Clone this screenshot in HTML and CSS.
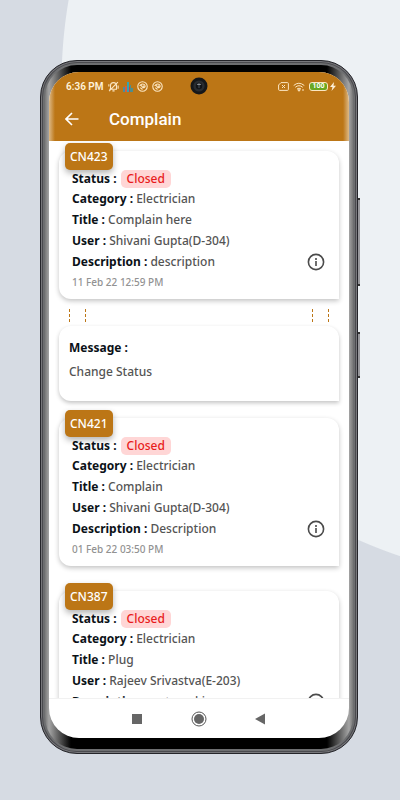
FILE: index.html
```html
<!DOCTYPE html>
<html lang="en">
<head>
<meta charset="utf-8">
<meta name="viewport" content="width=device-width, initial-scale=1">
<title>Complain</title>
<link rel="stylesheet" href="styles.css">
</head>
<body>
<div class="phone">
  <span class="side-key side-key-long"></span>
  <span class="side-key side-key-short"></span>
  <div class="bezel">
    <div class="screen">
      <header class="top">
        <div class="status-bar">
          <span class="clock">6:36 PM</span>
          <svg class="ico" width="11" height="11" viewBox="0 0 10 10"><path d="M2.3 7.5V4.2a2.7 2.7 0 0 1 5.4 0v3.3H1.2M4 9h2M1 9.2 9 1M.8 3v2M9.2 4v3"/></svg>
          <svg width="10" height="10" viewBox="0 0 10 10"><path fill="#4b8f9b" d="M0 5h2v5H0z"/><path fill="#dc5b3e" d="M2 4h2v6H2z"/><path fill="#2ea5b5" d="M4 0h2v10H4z"/><path fill="#c9463e" d="M6 5h2v5H6z"/><path fill="#4f8d8c" d="M7 3h1v7H7zM8 6h2v4H8z"/></svg>
          <svg class="ico" width="11" height="11" viewBox="0 0 10 10"><circle cx="5" cy="5" r="4.3"/><path d="M2.4 4.5C4 2 7 2.4 7.4 4.5c.3 1.4-1.5 2.2-2.4 1L3.3 3.6M3 6l2 1.7M5.4 4.1l1.4 1.6"/></svg>
          <svg class="ico" width="11" height="11" viewBox="0 0 10 10"><circle cx="5" cy="5" r="4.3"/><path d="M2.4 4.5C4 2 7 2.4 7.4 4.5c.3 1.4-1.5 2.2-2.4 1L3.3 3.6M3 6l2 1.7M5.4 4.1l1.4 1.6"/></svg>
          <span class="spacer"></span>
          <svg class="ico" width="11" height="9" viewBox="0 0 11 9"><path d="M3 .6h6.4q1 0 1 1v5.8q0 1-1 1H1.6q-1 0-1-1V3zM4 3l3 3M7 3 4 6"/></svg>
          <svg class="ico" width="12" height="10" viewBox="0 0 12 10"><path d="M.7 3.5q5-4.5 10.6 0M2.3 5.3q3.7-3.2 7.4 0M4 7q2-1.7 4 0"/><path d="m4.8 7.8 1.2 1.5 1.2-1.5zM10 7v2"/></svg>
          <span class="battery">100</span>
          <svg class="bolt" width="6" height="9" viewBox="0 0 6 9"><path fill="#fdf0d8" d="M4 0 0 5h2.5L1.5 9 6 3.7H3.5z"/></svg>
        </div>
        <div class="app-bar">
          <button class="back" aria-label="Back"><svg width="14" height="14" viewBox="0 0 14 14"><path d="M13.5 7H1.2M7 1 1 7l6 6"/></svg></button>
          <h1>Complain</h1>
        </div>
        <svg class="camera" width="18" height="18" viewBox="0 0 18 18"><circle cx="9" cy="9" r="8.5" fill="#15171a"/><circle cx="9" cy="9" r="5.6" fill="#292c30"/><circle cx="9" cy="9" r="3.2" fill="#111418"/><path d="M6.6 7.4q2.4-2 4.8 0L9 8.6z" fill="#8a9098"/><circle cx="9" cy="10" r="1.2" fill="#30353c"/></svg>
      </header>
      <main class="list">
        <article class="ticket">
          <h2 class="tag">CN423</h2>
          <p class="status"><b>Status :</b> <span class="pill">Closed</span></p>
          <p><b>Category :</b> Electrician</p>
          <p><b>Title :</b> Complain here</p>
          <p><b>User :</b> Shivani Gupta(D-304)</p>
          <div class="row"><p><b>Description :</b> description</p>
            <button class="info" aria-label="Details"><svg width="18" height="18" viewBox="0 0 18 18"><circle cx="9" cy="9" r="7.6"/><path d="M9 8v5M9 5v2"/></svg></button></div>
          <time>11 Feb 22 12:59 PM</time>
        </article>
        <div class="links"><i></i><i></i><span class="spacer"></span><i></i><i></i></div>
        <section class="message">
          <h3>Message :</h3>
          <p>Change Status</p>
        </section>
        <article class="ticket">
          <h2 class="tag">CN421</h2>
          <p class="status"><b>Status :</b> <span class="pill">Closed</span></p>
          <p><b>Category :</b> Electrician</p>
          <p><b>Title :</b> Complain</p>
          <p><b>User :</b> Shivani Gupta(D-304)</p>
          <div class="row"><p><b>Description :</b> Description</p>
            <button class="info" aria-label="Details"><svg width="18" height="18" viewBox="0 0 18 18"><circle cx="9" cy="9" r="7.6"/><path d="M9 8v5M9 5v2"/></svg></button></div>
          <time>01 Feb 22 03:50 PM</time>
        </article>
        <article class="ticket">
          <h2 class="tag">CN387</h2>
          <p class="status"><b>Status :</b> <span class="pill">Closed</span></p>
          <p><b>Category :</b> Electrician</p>
          <p><b>Title :</b> Plug</p>
          <p><b>User :</b> Rajeev Srivastva(E-203)</p>
          <div class="row"><p><b>Description :</b> not working</p>
            <button class="info" aria-label="Details"><svg width="18" height="18" viewBox="0 0 18 18"><circle cx="9" cy="9" r="7.6"/><path d="M9 8v5M9 5v2"/></svg></button></div>
        </article>
      </main>
      <nav class="nav">
        <button aria-label="Recent apps"><svg width="16" height="16" viewBox="0 0 16 16"><path fill="#666" d="M3 3h10v10H3z"/></svg></button>
        <button aria-label="Home"><svg width="16" height="16" viewBox="0 0 16 16"><circle cx="8" cy="8" r="7" fill="none" stroke="#555"/><circle cx="8" cy="8" r="5" fill="#666"/></svg></button>
        <button aria-label="Back"><svg width="16" height="16" viewBox="0 0 16 16"><path fill="#666" d="M12 2.5v11L2 8z"/></svg></button>
      </nav>
    </div>
  </div>
</div>
</body>
</html>
```
FILE: styles.css
```css
* { box-sizing: border-box; margin: 0; }
body {
  display: flex;
  height: 100vh;
  padding: 60px 42px 46px 40px;
  background: radial-gradient(circle at 560px 84px, #edf1f4 498px, #d6dbe3 499px);
  font-family: "Noto Sans", "Open Sans", sans-serif;
  font-size: 12px;
  font-weight: 500;
  color: #545454;
}
button { display: flex; padding: 0; border: 0; background: none; }
svg { flex: none; }
.spacer { flex: 1; }

.phone {
  position: relative;
  flex: 1;
  display: flex;
  min-width: 0;
  padding: 4px;
  border: 1px solid #25252a;
  border-radius: 37px;
  background: #6d6e70;
  box-shadow: inset 0 0 0 1px #77777b, inset 0 0 0 2px #4a4a4e;
}
.side-key {
  position: absolute;
  right: -3px;
  width: 2px;
  border: solid #333;
  border-width: 2px 0;
  background: #98989c;
}
.side-key-long { top: 137px; height: 88px; }
.side-key-short { top: 271px; height: 46px; }
.bezel {
  flex: 1;
  display: flex;
  min-width: 0;
  padding: 7px 4px 11px;
  border-radius: 32px;
  background: linear-gradient(90deg, #777, #a5a5a5 4px, #000 26px, #000 calc(100% - 26px), #a5a5a5 calc(100% - 4px), #777);
}
.screen {
  flex: 1;
  display: flex;
  flex-direction: column;
  min-width: 0;
  overflow: hidden;
  border-radius: 30px;
  background: #fff;
}

.top {
  position: relative;
  flex: none;
  background: linear-gradient(90deg, #ddb987, #bc7616 6px, #bc7616 calc(100% - 6px), #ddb987);
  color: #fff;
}
.status-bar {
  display: flex;
  align-items: center;
  gap: 4px;
  height: 29px;
  padding: 0 13px 0 17px;
}
.clock { font: 600 10px Roboto, sans-serif; color: #fff2da; }
.ico { fill: none; stroke: #fbe6c2; stroke-width: 1; }
.battery {
  width: 19px;
  border: 1px solid #fbe6c2;
  border-radius: 3px;
  background: #69a820;
  font: 700 7px/7px Roboto, sans-serif;
  text-align: center;
}
.bolt { margin-left: -2px; }
.camera { position: absolute; top: 5px; left: calc(50% - 9px); }
.app-bar {
  display: flex;
  align-items: center;
  gap: 30px;
  height: 40px;
  padding: 0 16px 4px;
}
.back svg { fill: none; stroke: #fff; stroke-width: 1.6; }
h1 { font: 500 17px Roboto, sans-serif; }

.list { flex: 1; min-height: 0; overflow: hidden; padding: 10px 10px 0; }
.ticket {
  position: relative;
  padding: 18px 14px 7px 13px;
  border-radius: 12px 12px 0 12px;
  background: #fff;
  box-shadow: 0 2px 5px rgba(0, 0, 0, .24);
}
.ticket + .ticket { margin-top: 25px; }
.ticket p { line-height: 21px; }
.ticket .status { display: flex; align-items: center; gap: 4px; line-height: 19px; }
b, h3 { font-weight: 700; font-size: 12px; color: #0b1117; }
.tag {
  position: absolute;
  top: -8px;
  left: 6px;
  padding: 0 5px;
  border-radius: 5px;
  background: #bc7616;
  box-shadow: 0 3px 6px rgba(0, 0, 0, .3);
  color: #fff;
  font-size: 12px;
  font-weight: 500;
  line-height: 27px;
}
.pill {
  padding: 0 6px;
  border-radius: 5px;
  background: #ffd6d6;
  color: #e81c1c;
  line-height: 18px;
}
.row { display: flex; align-items: center; justify-content: space-between; height: 21px; }
.info svg { fill: none; stroke: #4b4b4b; stroke-width: 1.6; }
time { display: block; font-size: 10px; line-height: 20px; color: #929292; }

.links { display: flex; gap: 15px; height: 27px; padding: 10px 10px 4px; }
.links i { width: 1px; background: repeating-linear-gradient(#bc7616 0 3px, transparent 3px 5px); }
.message {
  margin-bottom: 17px;
  padding: 11px 10px 19px;
  border-radius: 12px 12px 0 12px;
  box-shadow: 0 2px 4px rgba(0, 0, 0, .24);
}
.message h3 { margin-bottom: 3px; line-height: 21px; }
.message p { line-height: 21px; }

.nav {
  flex: none;
  display: flex;
  align-items: center;
  justify-content: center;
  gap: 46px;
  height: 40px;
  border-top: 1px solid #f1f1f1;
}
```
